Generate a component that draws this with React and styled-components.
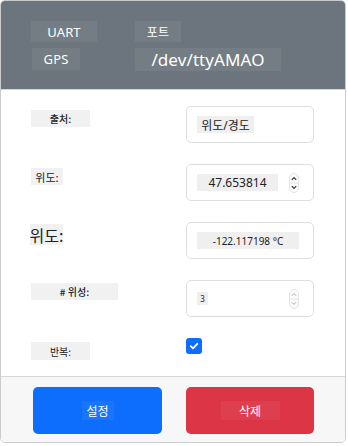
import React from 'react';
import styled, { createGlobalStyle } from 'styled-components';

const GlobalStyle = createGlobalStyle`
  html, body {
    margin: 0;
    padding: 0;
    background: #ffffff;
  }
  body {
    font-family: "Noto Sans", "Noto Sans CJK KR", sans-serif;
  }
`;

const Card = styled.div`
  width: 346px;
  height: 443px;
  box-sizing: border-box;
  border: 1px solid #c9cbcd;
  border-radius: 5px;
  overflow: hidden;
  display: flex;
  flex-direction: column;
  background: #ffffff;
`;

const Header = styled.div`
  height: 89px;
  box-sizing: border-box;
  background: #6c757d;
  padding: 20px 0 0 30px;
  display: grid;
  grid-template-columns: 104px 146px;
  grid-template-rows: 21px 23px;
  row-gap: 6px;
  align-items: start;
  border-bottom: 1px solid #d5d7d9;
`;

const HeadTag = styled.span`
  display: inline-flex;
  align-items: center;
  justify-content: center;
  justify-self: start;
  box-sizing: border-box;
  width: ${(p) => p.$w}px;
  height: ${(p) => p.$h || 21}px;
  margin-left: ${(p) => p.$ml || 0}px;
  background: rgba(255, 255, 255, 0.06);
  color: #ffffff;
  font-size: ${(p) => p.$size || 13}px;
  font-family: "Noto Sans", "Noto Sans CJK KR", sans-serif;
  letter-spacing: 0.1px;
  white-space: nowrap;
`;

const Body = styled.div`
  flex: 1;
  padding: 16px 0 0 30px;
  display: grid;
  grid-template-columns: 155px 128px;
  grid-auto-rows: 37px;
  row-gap: 21px;
  align-content: start;
`;

const Label = styled.span`
  justify-self: start;
  align-self: start;
  margin-top: ${(p) => p.$mt || 4}px;
  margin-left: ${(p) => p.$ml || 0}px;
  display: inline-flex;
  align-items: center;
  justify-content: center;
  width: ${(p) => p.$w}px;
  height: ${(p) => p.$h || 17}px;
  background: #f1f1f1;
  color: #222;
  font-size: ${(p) => p.$size || 10}px;
  font-weight: ${(p) => (p.$bold ? 500 : 400)};
  font-family: "Noto Sans CJK KR", sans-serif;
  white-space: nowrap;
`;

const Field = styled.div`
  box-sizing: border-box;
  height: 37px;
  border: 1px solid #dcdfe2;
  border-radius: 5px;
  display: flex;
  align-items: center;
  padding: 0 14px 0 10px;
  gap: 10px;
`;

const Value = styled.span`
  display: inline-flex;
  align-items: center;
  justify-content: center;
  box-sizing: border-box;
  width: ${(p) => p.$w}px;
  height: ${(p) => p.$h || 17}px;
  background: #efefef;
  color: #222;
  font-size: ${(p) => p.$size || 12}px;
  font-family: "Noto Sans", "Noto Sans CJK KR", sans-serif;
  white-space: nowrap;
`;

const Spin = styled.svg`
  flex: none;
  margin-left: auto;
`;

const CheckCell = styled.div`
  align-self: start;
  width: 16px;
  height: 16px;
  border-radius: 3px;
  background: #0d6efd;
  display: flex;
  align-items: center;
  justify-content: center;
`;

const Footer = styled.div`
  height: 66px;
  box-sizing: border-box;
  border-top: 1px solid #d5d7d9;
  background: #f7f7f7;
  padding: 10px 0 0 32px;
  display: flex;
  gap: 24px;
`;

const Button = styled.button`
  width: ${(p) => p.$w || 129}px;
  height: 47px;
  border: none;
  border-radius: 5px;
  background: ${(p) => p.$bg};
  display: flex;
  align-items: center;
  justify-content: center;
  padding: 0;
  cursor: pointer;
`;

const BtnText = styled.span`
  display: inline-flex;
  align-items: center;
  justify-content: center;
  width: ${(p) => p.$w}px;
  height: 19px;
  background: rgba(255, 255, 255, 0.05);
  color: #ffffff;
  font-size: 12px;
  font-family: "Noto Sans CJK KR", sans-serif;
`;

function Spinner({ faint }) {
  const c = faint ? '#9a9a9a' : '#333';
  return (
    <Spin width="10" height="20" viewBox="0 0 10 20">
      <rect x="0.5" y="0.5" width="9" height="19" rx="4.5" fill="#fafafa" stroke="#e4e4e4" />
      <line x1="1" y1="10" x2="9" y2="10" stroke="#e4e4e4" />
      <path d="M2.8 6.8 L5 4.6 L7.2 6.8" fill="none" stroke={c} strokeWidth={faint ? 0.8 : 1.2} />
      <path d="M2.8 13.2 L5 15.4 L7.2 13.2" fill="none" stroke={c} strokeWidth={faint ? 0.8 : 1.2} />
    </Spin>
  );
}

export default function App() {
  return (
    <>
      <GlobalStyle />
      <Card>
        <Header>
          <HeadTag $w={66} $size={13}>UART</HeadTag>
          <HeadTag $w={46} $size={12}>포트</HeadTag>
          <HeadTag $w={48} $h={22} $size={13} $ml={1}>GPS</HeadTag>
          <HeadTag $w={146} $h={23} $size={17}>/dev/ttyAMAO</HeadTag>
        </Header>

        <Body>
          <Label $w={59} $bold>출처:</Label>
          <Field>
            <Value $w={57} $size={12}>위도/경도</Value>
          </Field>

          <Label $w={32} $size={11}>위도:</Label>
          <Field>
            <Value $w={81} $size={12}>47.653814</Value>
            <Spinner />
          </Field>

          <Label $w={33} $h={21} $size={16} $mt={2} $ml={-1}>위도:</Label>
          <Field>
            <Value $w={103} $size={10}>-122.117198 °C</Value>
          </Field>

          <Label $w={87} $bold $size={10} $mt={3}>&#35; 위성:</Label>
          <Field>
            <Value $w={11} $h={13} $size={8}>3</Value>
            <Spinner faint />
          </Field>

          <Label $w={59} $h={18} $mt={4}>반복:</Label>
          <CheckCell>
            <svg width="10" height="10" viewBox="0 0 10 10">
              <path d="M1.8 5.2 L4 7.3 L8.3 2.8" fill="none" stroke="#fff" strokeWidth="1.8" strokeLinecap="round" strokeLinejoin="round" />
            </svg>
          </CheckCell>
        </Body>

        <Footer>
          <Button $bg="#0d6efd">
            <BtnText $w={32}>설정</BtnText>
          </Button>
          <Button $bg="#dc3545" $w={128}>
            <BtnText $w={59}>삭제</BtnText>
          </Button>
        </Footer>
      </Card>
    </>
  );
}
